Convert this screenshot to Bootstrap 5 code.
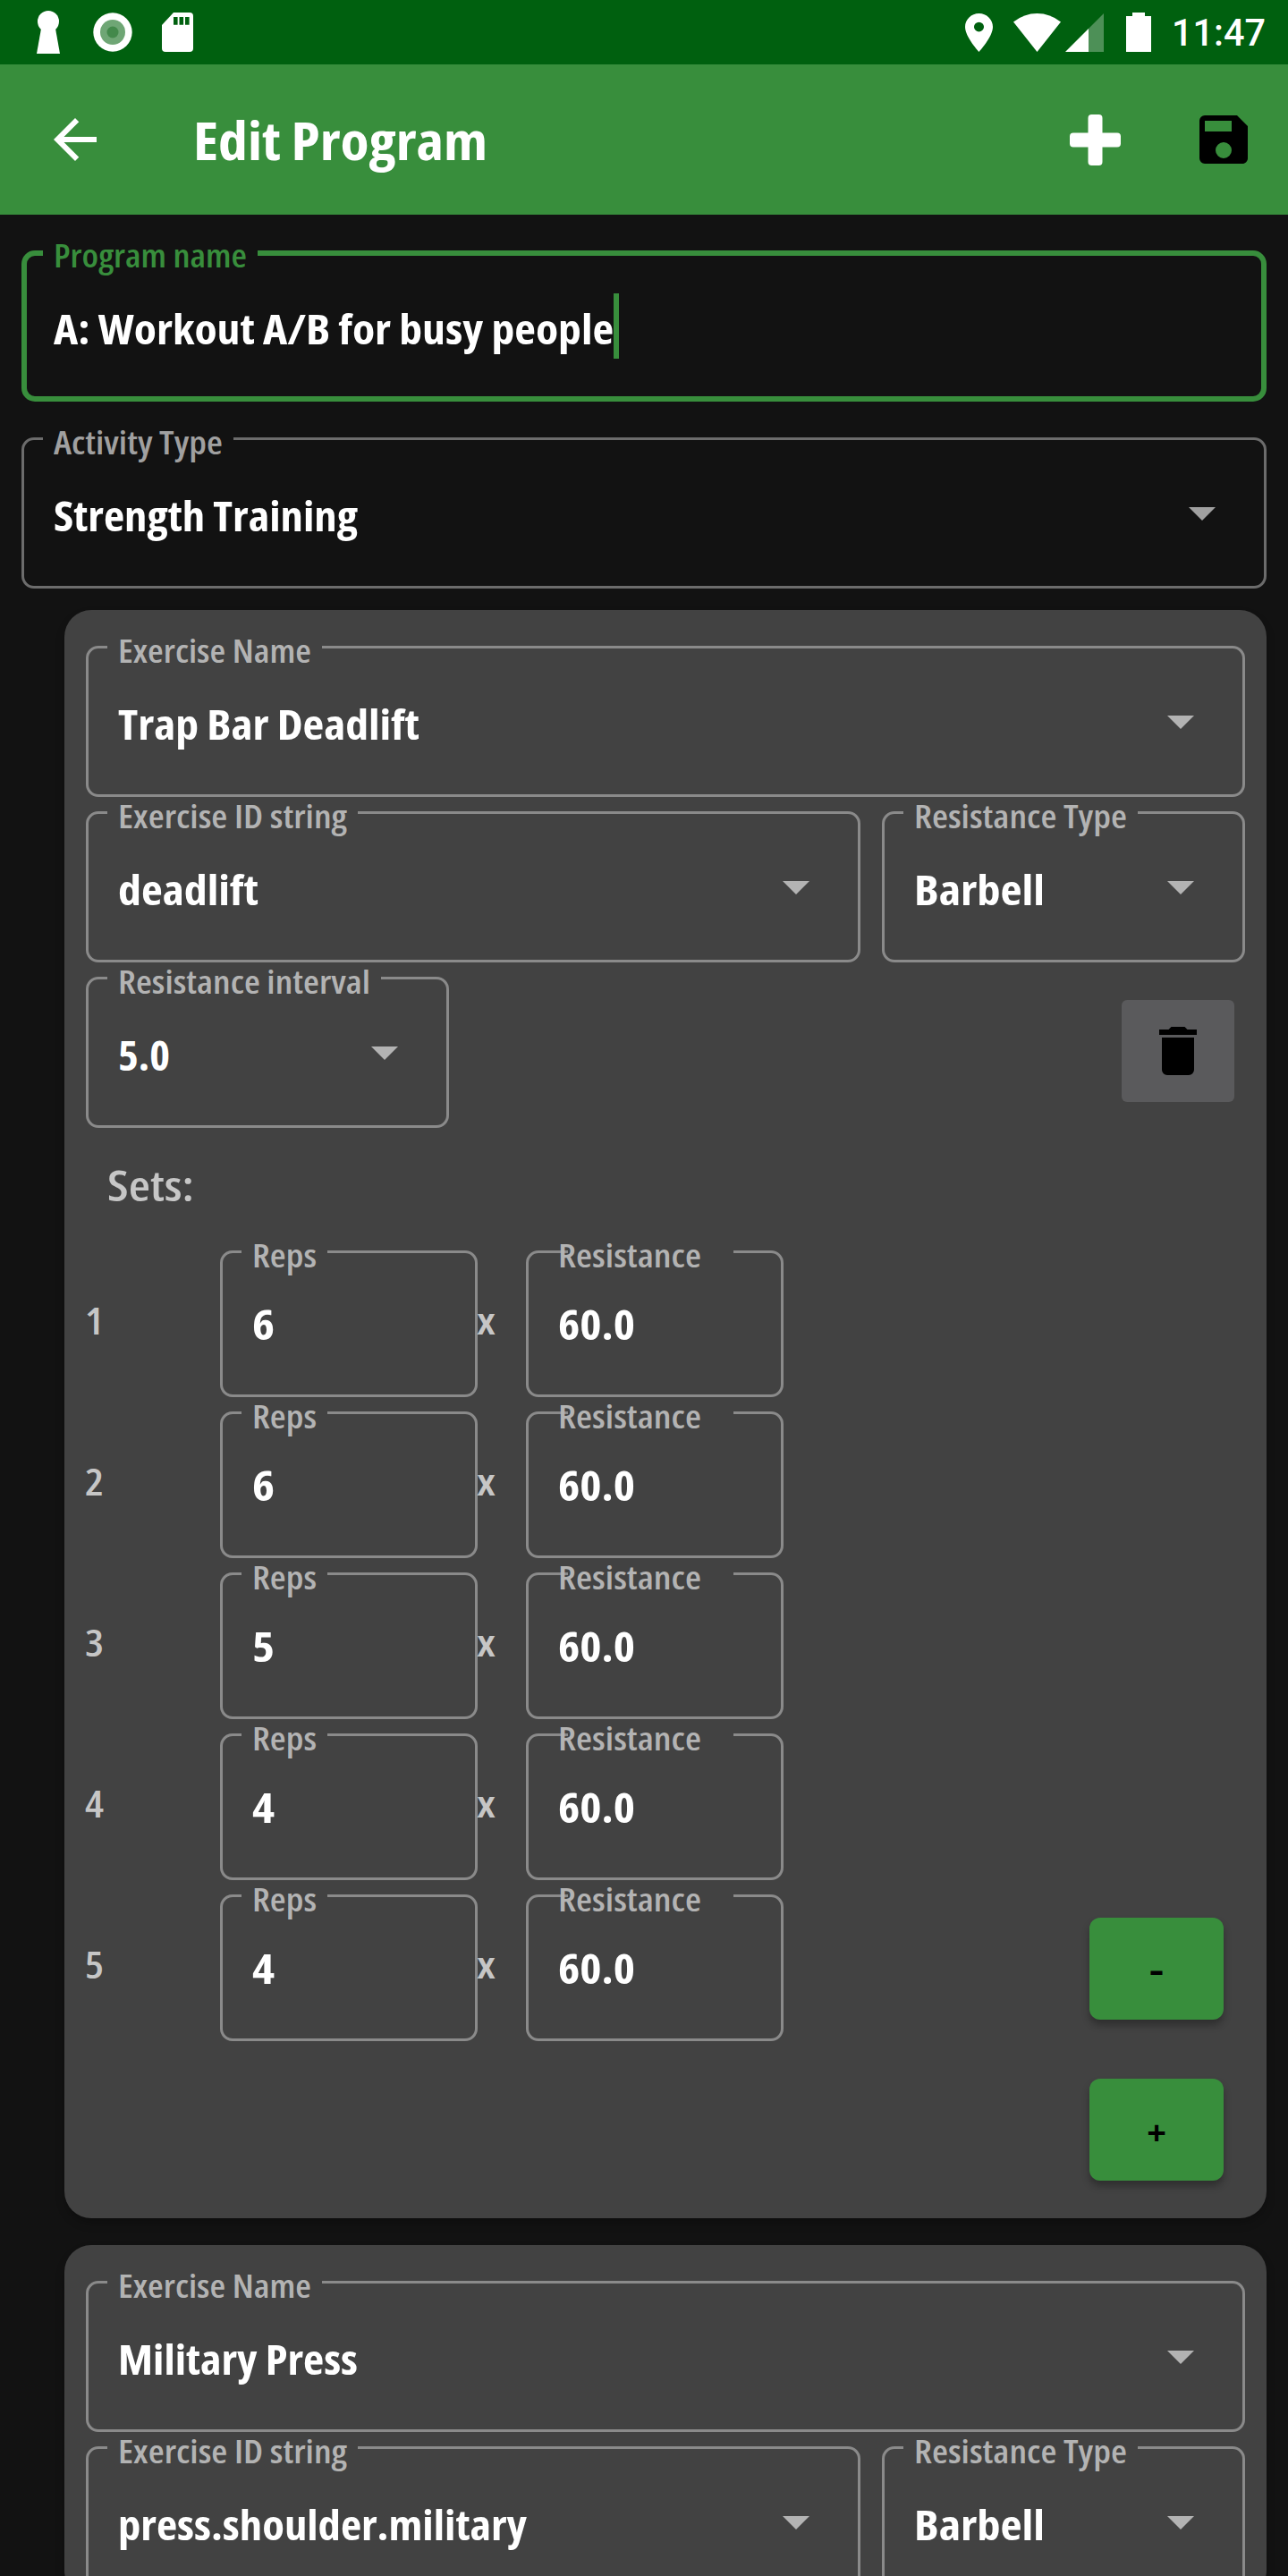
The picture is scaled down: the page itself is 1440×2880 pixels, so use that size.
<!DOCTYPE html>
<html lang="en">
<head>
<meta charset="utf-8">
<meta name="viewport" content="width=device-width, initial-scale=1">
<title>Edit Program</title>
<link href="https://cdn.jsdelivr.net/npm/bootstrap@5.3.0/dist/css/bootstrap.min.css" rel="stylesheet">
<style>
body{background:#121212;color:#fff;font-family:"Open Sans","Noto Sans",sans-serif;font-weight:650;font-stretch:80%;height:2880px;overflow:hidden}
svg{display:block;flex:none}
.statusbar{height:72px;background:#00600f;padding:0 25px 0 41px}
.status-dot{margin-left:37px}
.status-sd{margin-left:33px}
.status-wifi{margin-left:23px}
.status-cell{margin-left:5px}
.status-batt{margin-left:25px}
.clock{font:500 42px/50px Roboto,sans-serif;margin-left:23px;padding-top:2px}
.appbar{height:168px;background:#388e3c;padding:0 36px 0 48px}
.app-title{font-size:58.4px;line-height:72px;margin:0 0 0 96px;padding-top:2px;font-weight:700}
.save-icon{margin-left:79px}
.fit{display:inline-block;white-space:nowrap;transform-origin:0 50%}
.page{padding:40px 24px 0}
.fld{position:relative;height:169px;padding:57px 36px 0;--line:#6c6c6c;--lbl:#a0a0a0;--bg:#121212}
.fld::before{content:"";position:absolute;inset:0;border:3px solid var(--line);border-radius:14px}
.fld.active{--line:#388e3c;--lbl:#388e3c}
.fld.active::before{border-width:6px;border-radius:15px}
.fld-label{position:absolute;left:24px;top:-15px;padding:0 12px;font-size:35.4px;line-height:40px;color:var(--lbl);background:var(--bg);white-space:nowrap}
.fld-value{font-size:46.5px;line-height:60px;white-space:nowrap;font-weight:700}
.caret-bar{width:6px;height:73px;background:#388e3c;margin-top:-9px}
.tri{position:absolute;right:57px;top:78px;width:30px;height:15px;background:var(--lbl);clip-path:polygon(0 0,100% 0,50% 100%)}
.activity{margin:40px 0 24px}
.exercise{background:#424242;border-radius:30px;margin-left:48px;padding:40px 24px 0;box-shadow:0 6px 12px -2px rgba(0,0,0,.3)}
.exercise .fld{--line:#8a8a8a;--lbl:#b3b3b3;--bg:#424242}
.exercise.first{height:1798px;margin-bottom:30px}
.stack{gap:16px}
.w-small{width:406px}
.trash{width:126px;height:114px;border-radius:6px;background:#5a5a5c;margin:26px 12px 0 0;border:0;padding:0}
.sets-title{height:137px;padding:34px 0 0 24px;font-size:46.5px;line-height:60px;color:#c6c6c6}
.set-row{height:180px}
.set-no{width:150px}
.set-no .fit{margin-left:-1px}
.set-no,.set-x{font-size:40.6px;line-height:50px;padding-top:54px;color:#c6c6c6}
.set-x{width:54px}
.set-x .fit{margin-left:-1px}
.set-row .fld{width:288px;height:164px;padding-top:52px}
.fld.tight .fld-label{left:36px;padding:0 36px 0 0;background:linear-gradient(90deg,transparent 11px,var(--bg) 11px)}
.btn-step{width:150px;height:114px;border-radius:12px;background:#388e3c;color:#000;font-size:38px;line-height:60px;font-weight:700;border:0;margin:26px 24px 0 auto;padding:4px 0 0;box-shadow:0 6px 9px rgba(0,0,0,.3)}
.btn-step.minus{padding-top:0}
</style>
<script src="https://cdn.jsdelivr.net/npm/bootstrap@5.3.0/dist/js/bootstrap.bundle.min.js"></script>
</head>
<body>
<div class="statusbar d-flex align-items-center">
  <svg width="26" height="48" viewBox="0 0 26 48"><circle cx="13" cy="12" r="12" fill="#fff"/><path d="M5 20H21L26 48H0Z" fill="#fff"/></svg>
  <svg class="status-dot" width="44" height="44" viewBox="0 0 44 44"><circle cx="22" cy="22" r="21.7" fill="#fff"/><circle cx="22" cy="22" r="14" fill="#6fa675"/><circle cx="22" cy="22" r="6.500" fill="#43894b"/></svg>
  <svg class="status-sd" width="35" height="44" viewBox="0 0 35 44"><path d="M13 0H31Q35 0 35 4V40Q35 44 31 44H4Q0 44 0 40V14Z" fill="#fff"/><path d="M13 5h4.600v8.700H13zM19.500 5h4.600v8.700h-4.600zM26 5h4.600v8.700H26z" fill="#00600f"/></svg>
  <div class="d-flex align-items-center ms-auto">
    <svg width="31" height="43" viewBox="5 2 14 20" preserveAspectRatio="none"><path fill="#fff" d="M12 2C8.130 2 5 5.130 5 9c0 5.250 7 13 7 13s7-7.750 7-13c0-3.870-3.130-7-7-7zm0 9.500a2.500 2.500 0 1 1 0-5 2.500 2.500 0 0 1 0 5z"/></svg>
    <svg class="status-wifi" width="53" height="43" viewBox="0 0 53 43"><path fill="#fff" d="M0 9.500Q12 0 26.500 0T53 9.500L26.500 43Z"/></svg>
    <svg class="status-cell" width="43" height="43" viewBox="0 0 43 43"><path fill="#fff" fill-opacity=".3" d="M26 17L43 0V43H26Z"/><path fill="#fff" d="M0 43L26 17V43Z"/></svg>
    <svg class="status-batt" width="28" height="44" viewBox="0 0 28 44"><path fill="#fff" d="M7 0H21V4H28V44H0V4H7Z"/></svg>
    <div class="clock"><span class="fit" data-w="105">11:47</span></div>
  </div>
</div>
<header class="appbar d-flex align-items-center">
  <svg width="72" height="72" viewBox="0 0 24 24"><path fill="#fff" d="M20 11H7.830l5.590-5.590L12 4l-8 8 8 8 1.410-1.410L7.830 13H20v-2z"/></svg>
  <h1 class="app-title"><span class="fit" data-w="329">Edit Program</span></h1>
  <svg class="ms-auto" width="57" height="57" viewBox="0 0 57 57"><path fill="#fff" d="M24.500 0h8q4 0 4 4v16.500H53q4 0 4 4v8q0 4-4 4H36.500V53q0 4-4 4h-8q-4 0-4-4V36.500H4q-4 0-4-4v-8q0-4 4-4h16.500V4q0-4 4-4z"/></svg>
  <svg class="save-icon" width="72" height="72" viewBox="0 0 24 24"><path d="M17 3H5a2 2 0 0 0-2 2v14a2 2 0 0 0 2 2h14c1.100 0 2-.9 2-2V7l-4-4zm-5 16a3 3 0 1 1 0-6 3 3 0 0 1 0 6zm3-10H5V5h10v4z"/></svg>
</header>
<main class="page">
  <div class="fld active d-flex"><label class="fld-label"><span class="fit" data-w="216">Program name</span></label><div class="fld-value"><span class="fit" data-w="626">A: Workout A/B for busy people</span></div><div class="caret-bar"></div></div>
  <div class="fld activity"><label class="fld-label"><span class="fit" data-w="189">Activity Type</span></label><div class="fld-value"><span class="fit" data-w="340">Strength Training</span></div><i class="tri"></i></div>

  <section class="exercise first">
    <div class="d-flex flex-column stack">
      <div class="fld"><label class="fld-label"><span class="fit" data-w="216">Exercise Name</span></label><div class="fld-value"><span class="fit" data-w="337">Trap Bar Deadlift</span></div><i class="tri"></i></div>
      <div class="d-flex gap-4">
        <div class="fld flex-grow-1"><label class="fld-label"><span class="fit" data-w="256">Exercise ID string</span></label><div class="fld-value"><span class="fit" data-w="157">deadlift</span></div><i class="tri"></i></div>
        <div class="fld w-small"><label class="fld-label"><span class="fit" data-w="238">Resistance Type</span></label><div class="fld-value"><span class="fit" data-w="146">Barbell</span></div><i class="tri"></i></div>
      </div>
      <div class="d-flex justify-content-between align-items-start">
        <div class="fld w-small"><label class="fld-label"><span class="fit" data-w="282">Resistance interval</span></label><div class="fld-value"><span class="fit" data-w="58">5.0</span></div><i class="tri"></i></div>
        <button class="trash d-flex align-items-center justify-content-center" aria-label="Delete"><svg width="72" height="72" viewBox="0 0 24 24"><path d="M6 19a2 2 0 0 0 2 2h8a2 2 0 0 0 2-2V7H6v12zM19 4h-3.500l-1-1h-5l-1 1H5v2h14V4z"/></svg></button>
      </div>
    </div>
    <div class="sets-title"><span class="fit" data-w="97">Sets:</span></div>
    <div id="sets"></div>
    <div class="d-flex set-row"><button class="btn-step">+</button></div>
  </section>

  <section class="exercise">
    <div class="d-flex flex-column stack">
      <div class="fld"><label class="fld-label"><span class="fit" data-w="216">Exercise Name</span></label><div class="fld-value"><span class="fit" data-w="268">Military Press</span></div><i class="tri"></i></div>
      <div class="d-flex gap-4">
        <div class="fld flex-grow-1"><label class="fld-label"><span class="fit" data-w="256">Exercise ID string</span></label><div class="fld-value"><span class="fit" data-w="457">press.shoulder.military</span></div><i class="tri"></i></div>
        <div class="fld w-small"><label class="fld-label"><span class="fit" data-w="238">Resistance Type</span></label><div class="fld-value"><span class="fit" data-w="146">Barbell</span></div><i class="tri"></i></div>
      </div>
    </div>
  </section>
</main>
<script>
// One row per set: number, reps, resistance
const reps = [6, 6, 5, 4, 4];
document.getElementById('sets').innerHTML = reps.map((r, i) => `
  <div class="d-flex set-row">
    <div class="set-no"><span class="fit" data-w="21">${i + 1}</span></div>
    <div class="fld"><label class="fld-label"><span class="fit" data-w="72">Reps</span></label><div class="fld-value"><span class="fit" data-w="25">${r}</span></div></div>
    <div class="set-x"><span class="fit" data-w="21">x</span></div>
    <div class="fld tight"><label class="fld-label"><span class="fit" data-w="160">Resistance</span></label><div class="fld-value"><span class="fit" data-w="86">60.0</span></div></div>
    ${i === reps.length - 1 ? '<button class="btn-step minus"><span class="fit" data-w="16">-</span></button>' : ''}
  </div>`).join('');
// Condense each text to its set width
document.querySelectorAll('.fit').forEach(el => {
  const natural = el.getBoundingClientRect().width, w = +el.dataset.w;
  el.style.transform = `scaleX(${w / natural})`;
  el.style.marginRight = `${w - natural}px`;
});
</script>
</body>
</html>
